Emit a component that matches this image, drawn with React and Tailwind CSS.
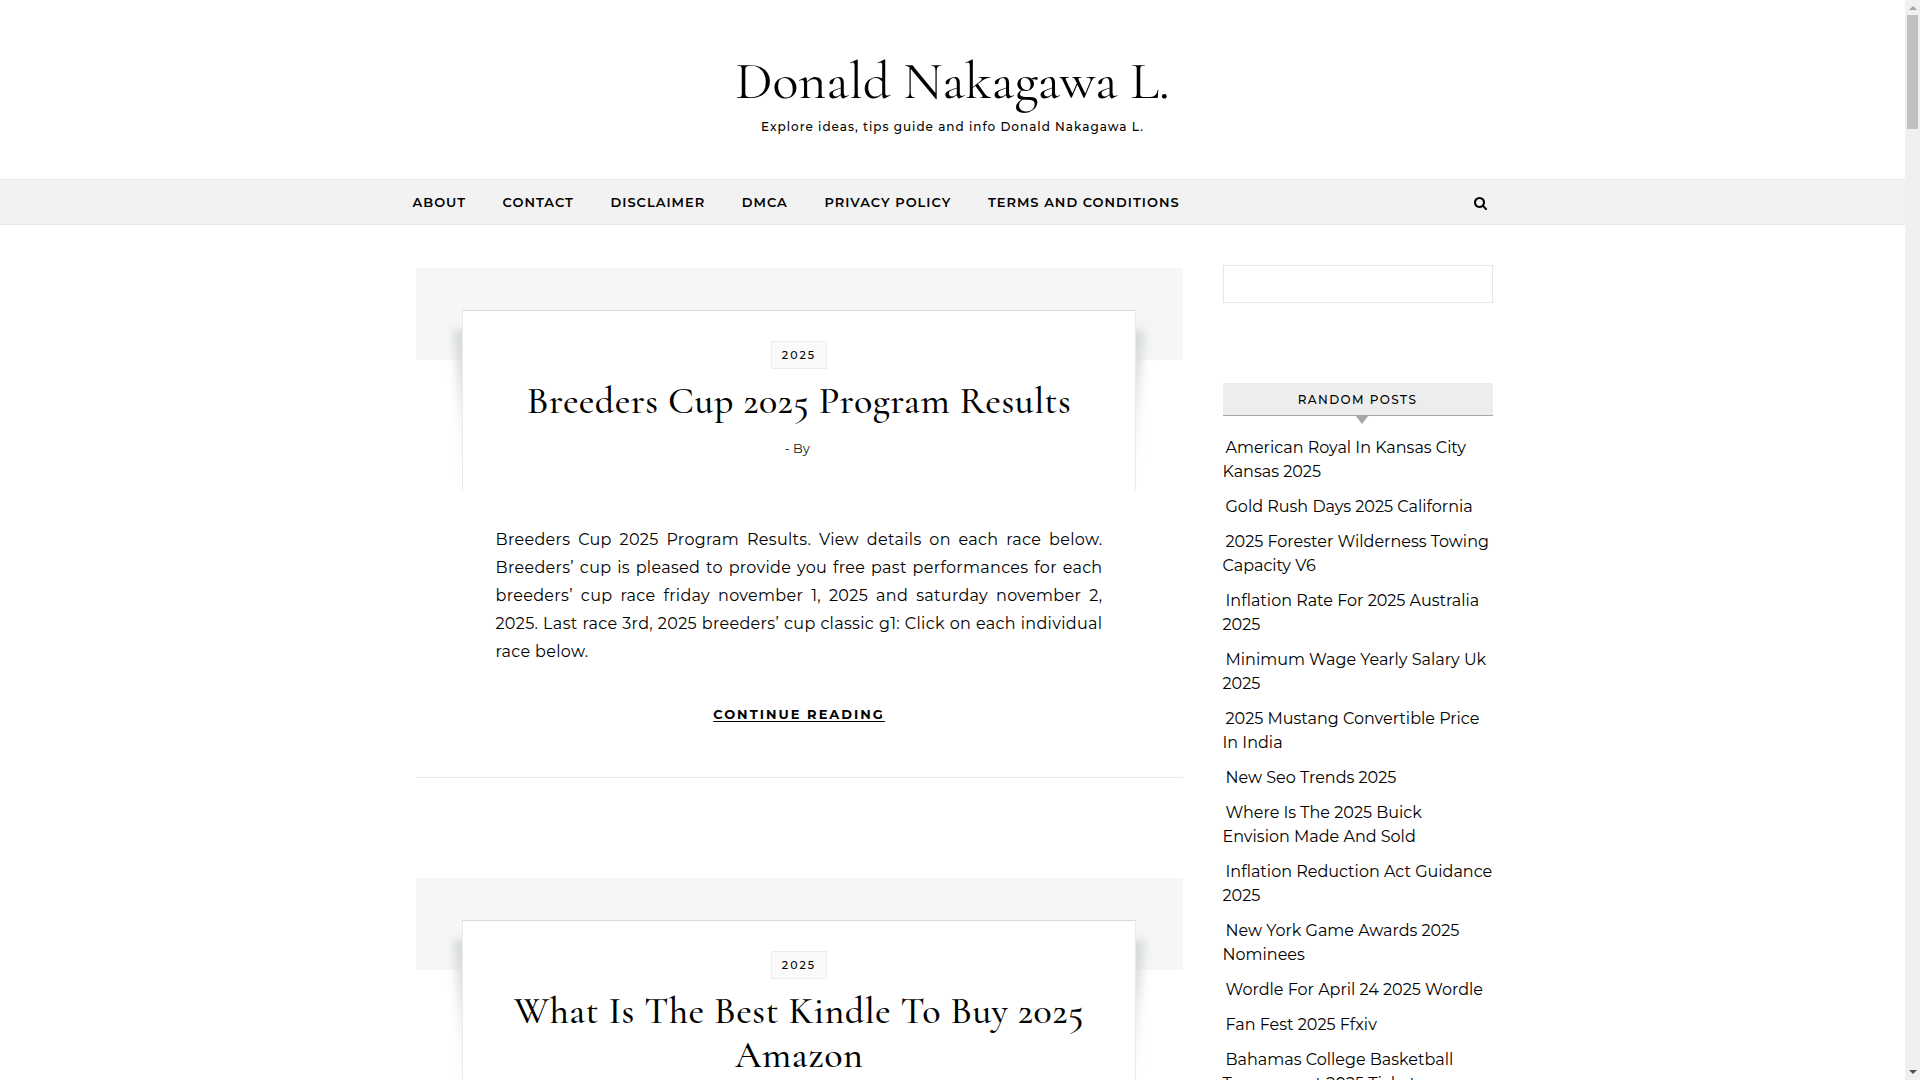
import { Fragment } from 'react'

const NAV_LINKS = ['About', 'Contact', 'Disclaimer', 'DMCA', 'Privacy Policy', 'Terms and Conditions']

const POSTS = [
  {
    category: '2025',
    title: 'Breeders Cup 2025 Program Results',
    excerpt:
      'Breeders Cup 2025 Program Results. View details on each race below. Breeders’ cup is pleased to provide you free past performances for each breeders’ cup race friday november 1, 2025 and saturday november 2, 2025. Last race 3rd, 2025 breeders’ cup classic g1: Click on each individual race below.',
  },
  { category: '2025', title: 'What Is The Best Kindle To Buy 2025 Amazon' },
]

const RANDOM_POSTS = [
  'American Royal In Kansas City Kansas 2025',
  'Gold Rush Days 2025 California',
  '2025 Forester Wilderness Towing Capacity V6',
  'Inflation Rate For 2025 Australia 2025',
  'Minimum Wage Yearly Salary Uk 2025',
  '2025 Mustang Convertible Price In India',
  'New Seo Trends 2025',
  'Where Is The 2025 Buick Envision Made And Sold',
  'Inflation Reduction Act Guidance 2025',
  'New York Game Awards 2025 Nominees',
  'Wordle For April 24 2025 Wordle',
  'Fan Fest 2025 Ffxiv',
  'Bahamas College Basketball Tournament 2025 Tickets',
]

function SearchIcon() {
  return (
    <svg viewBox="0 0 1664 1664" className="size-[13px]" fill="currentColor" aria-hidden="true">
      <path d="M1152 704q0-185-131.5-316.5t-316.5-131.5-316.5 131.5-131.5 316.5 131.5 316.5 316.5 131.5 316.5-131.5 131.5-316.5zm512 832q0 52-38 90t-90 38q-54 0-90-38l-343-342q-179 124-399 124-143 0-273.5-55.5t-225-150-150-225-55.5-273.5 55.5-273.5 150-225 225-150 273.5-55.5 273.5 55.5 225 150 150 225 55.5 273.5q0 220-124 399l343 343q37 37 37 90z" />
    </svg>
  )
}

function Header() {
  return (
    <header className="flex h-[179px] flex-col items-center pt-[50px] text-center">
      <h1 className="font-['Cormorant_Garamond','Liberation_Serif',serif] text-[54px] leading-[62px]">
        <a href="#">Donald Nakagawa L.</a>
      </h1>
      <p className="mt-[5px] text-xs leading-5 font-medium tracking-[1px]">
        Explore ideas, tips guide and info Donald Nakagawa L.
      </p>
    </header>
  )
}

function NavBar() {
  return (
    <nav className="border-y border-[#e6e6e6] bg-[#f2f2f2]">
      <div className="mx-auto flex h-11 max-w-[1080px] items-center justify-between pt-[2px]">
        <ul className="text-[13px] font-semibold tracking-[1px] uppercase">
          {NAV_LINKS.map((label) => (
            <Fragment key={label}>
              <li className="mr-8 inline-block">
                <a href="#">{label}</a>
              </li>{' '}
            </Fragment>
          ))}
        </ul>
        <button type="button" aria-label="Search" className="pr-[6px]">
          <SearchIcon />
        </button>
      </div>
    </nav>
  )
}

function Post({ post }) {
  return (
    <article className="mb-[100px] border-b border-[#ececec] pb-[53px]">
      <div className="h-[92px] bg-[#f6f6f6]" />

      {/* Card overlapping the band, with a lifted shadow on each side */}
      <div className="relative isolate mx-[6%] -mt-[50px]">
        <div className="absolute top-5 left-[2px] -z-10 h-[150px] w-10 origin-bottom skew-x-[4deg] bg-linear-to-b from-[#d3d7d7] to-transparent blur-[5px]" />
        <div className="absolute top-5 right-[2px] -z-10 h-[150px] w-10 origin-bottom -skew-x-[4deg] bg-linear-to-b from-[#d3d7d7] to-transparent blur-[5px]" />
        <div className="flex flex-col items-center border-x border-t border-x-[#ebebeb] border-t-[#d9d9d9] bg-white px-8 pt-[30px] pb-8 text-center">
          <a href="#" className="border border-[#ececec] bg-[#fafafa] px-[10px] text-[11px] leading-[26px] font-medium tracking-[2px]">
            {post.category}
          </a>
          <h2 className="mt-[10px] font-['Cormorant_Garamond','Liberation_Serif',serif] text-[38px] leading-[44px] font-medium tracking-[0.013em]">
            <a href="#">{post.title}</a>
          </h2>
          <p className="mt-[15px] text-[13px] leading-5 text-[#222]">- By&nbsp;</p>
        </div>
      </div>

      {post.excerpt && (
        <p className="mx-20 mt-9 text-justify text-base leading-7 tracking-[0.02em]">{post.excerpt}</p>
      )}
      <p className="mt-[38px] text-center leading-5">
        <a href="#" className="text-[13px] font-bold tracking-[2px] uppercase underline underline-offset-2">
          Continue Reading
        </a>
      </p>
    </article>
  )
}

function Sidebar() {
  return (
    <aside className="w-[270px] shrink-0 pt-10">
      <input
        type="text"
        aria-label="Search posts"
        className="h-[38px] w-full border border-[#e6e6e6] bg-white px-3 text-sm outline-none"
      />
      <h3 className="relative mt-20 border-b border-[#a6a6a6] bg-[#ededed] pt-[2px] text-center text-xs leading-[30px] font-medium tracking-[0.12em] uppercase">
        Random Posts
        <span className="absolute top-full left-[49%] border-x-[7px] border-t-[9px] border-x-transparent border-t-[#a6a6a6]" />
      </h3>
      <ul className="mt-5 flex flex-col gap-[11px]">
        {RANDOM_POSTS.map((title) => (
          <li key={title} className="indent-[3px] leading-6">
            <a href="#">{title}</a>
          </li>
        ))}
      </ul>
    </aside>
  )
}

function ScrollRail() {
  return (
    <div className="flex w-[15px] shrink-0 flex-col items-center justify-between bg-[#f0f0f0]" aria-hidden="true">
      <div className="flex w-full flex-col items-center">
        <span className="mt-[6px] border-x-4 border-b-4 border-x-transparent border-b-[#a3a3a3]" />
        <span className="mt-[5px] h-[114px] w-[11px] bg-[#c1c1c1]" />
      </div>
      <span className="mb-[6px] border-x-4 border-t-4 border-x-transparent border-t-[#505050]" />
    </div>
  )
}

export default function App() {
  return (
    <div className="flex h-screen overflow-hidden bg-white font-['Montserrat','Inter',sans-serif] text-[#010101]">
      <div className="min-w-0 flex-1">
        <Header />
        <NavBar />
        <div className="mx-auto flex max-w-[1080px] gap-10">
          <main className="min-w-0 flex-1 pt-[43px] pl-[3px]">
            {POSTS.map((post) => (
              <Post key={post.title} post={post} />
            ))}
          </main>
          <Sidebar />
        </div>
      </div>
      <ScrollRail />
    </div>
  )
}
